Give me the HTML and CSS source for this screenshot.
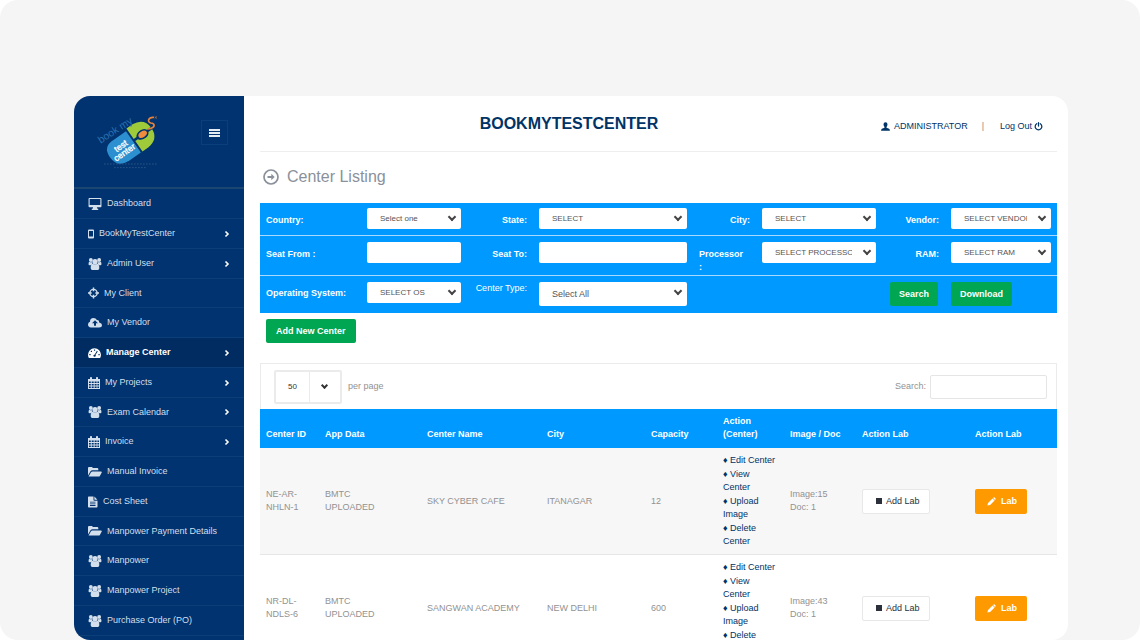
FILE: index.html
```html
<!DOCTYPE html>
<html lang="en">
<head>
<meta charset="utf-8">
<meta name="viewport" content="width=device-width, initial-scale=1">
<title>BookMyTestCenter - Center Listing</title>
<link rel="stylesheet" href="styles.css">
</head>
<body>
<svg class="sprite" aria-hidden="true">
  <symbol id="i-desktop" viewBox="0 0 14 13"><path fill-rule="evenodd" d="M1 0h12q1 0 1 1v8q0 1-1 1H9l.6 1.6h.9V13h-7v-1.400h.9L5 10H1q-1 0-1-1V1q0-1 1-1zm.2 1.200v6.300h11.600V1.200z"/></symbol>
  <symbol id="i-mobile" viewBox="0 0 6 12"><path fill-rule="evenodd" d="M1 1.500h4q1 0 1 1v7q0 1-1 1H1q-1 0-1-1v-7q0-1 1-1zm0 1.500v5.500h4V3z"/></symbol>
  <symbol id="i-users" viewBox="0 0 14 13"><circle cx="2.500" cy="2.200" r="2.100"/><circle cx="11.500" cy="2.200" r="2.100"/><circle cx="7" cy="4" r="2.900"/><path d="M0 6.500Q0 4 1.200 4q1.300 1 2.400.3Q3.700 6 4.600 6.800q-1.600.1-2.200 1H1Q0 7.800 0 6.500zM14 6.500Q14 4 12.800 4q-1.300 1-2.400.3-.1 1.700-1 2.500 1.600.1 2.200 1H13q1 0 1-1.300zM2.300 10.800q0-4 2.400-4.200Q7 7.200 9.300 6.600q2.400.2 2.400 4.200 0 2.200-1.800 2.200H4.100q-1.800 0-1.800-2.200z"/></symbol>
  <symbol id="i-cross" viewBox="0 0 12 12"><path fill="none" stroke="currentColor" stroke-width="1.500" d="M6 2a4 4 0 1 1 0 8 4 4 0 0 1 0-8z"/><path d="M5.200 0h1.600v4H5.200zM5.200 8h1.600v4H5.200zM0 5.200h4v1.600H0zM8 5.200h4v1.600H8z"/></symbol>
  <symbol id="i-cloud" viewBox="0 0 14 12"><path fill-rule="evenodd" d="M3 10.500Q0 10 0 7.500 0 5.500 2 4.700 2 1 5.500 1q2.400 0 3.400 2.100Q11.300 3 11.200 5.500 14 6 14 8q0 2.500-3 2.500zM7 3.300 4 6.300h2v2.500h2V6.300h2z"/></symbol>
  <symbol id="i-gauge" viewBox="0 0 14 12"><path fill-rule="evenodd" d="M7 1q3 0 5 2.100t2 4.900q0 1.700-.9 3.300H.9Q0 9.700 0 8q0-2.800 2-4.900T7 1zM6.400 2.200v1.500h1.300V2.200zM3 3.600v1.300h1.300V3.600zM1.400 7v1.300h1.400V7zM11.200 7v1.300h1.400V7zM9.600 3.700 7.300 7.500q-1.500.2-1.500 1.300 0 1.300 1.300 1.300t1.300-1.300q0-.5-.3-.9l2.400-3.600z"/></symbol>
  <symbol id="i-cal" viewBox="0 0 12 12"><path fill-rule="evenodd" d="M0 2h2V.5Q2 0 3 0t1 .5V2h4V.500Q8 0 9 0t1 .5V2h2v10H0zm1 2.500v1.500h1.800V4.500zm2.700 0v1.500h2V4.500zm2.900 0v1.500h2V4.500zm2.800 0v1.500H11V4.500zM1 6.900v1.600h1.800V6.900zm2.700 0v1.600h2V6.900zm2.900 0v1.600h2V6.900zm2.800 0v1.600H11V6.900zM1 9.400v1.700h1.800V9.400zm2.700 0v1.700h2V9.400zm2.900 0v1.700h2V9.400zm2.800 0v1.700H11V9.400z"/></symbol>
  <symbol id="i-folder" viewBox="0 0 14 12"><path d="M0 9.500V2q0-1 1-1h2.700q1 0 1 1h4.600q1 0 1 1v1.300H4.500q-1.200 0-2 .9z"/><path d="M.6 10.500 3 6.200q.5-.8 1.500-.8H13q1.200 0 .7 1L12 9.700q-.5.900-1.500.9z"/></symbol>
  <symbol id="i-file" viewBox="0 0 10 12"><path fill-rule="evenodd" d="M.7.500h4.800V4q0 .7.700.7h3.300v6.100q0 .7-.7.700H.7q-.7 0-.7-.7V1.200Q0 .500.700.500zM6.400.600l3 3.200h-3zM2 5.700v.9h5.500v-.9zm0 1.700v.9h5.500v-.9zm0 1.700v.9h5.500v-.9z"/></symbol>
  <symbol id="i-right" viewBox="0 0 6 8"><path fill="none" stroke="currentColor" stroke-width="1.600" d="M1.500 1.500l2.500 2.500-2.500 2.500"/></symbol>
  <symbol id="i-user" viewBox="0 0 10 10"><path d="M5 .3q2.200 0 2.200 2.300 0 2-1.100 3v.8L9 7.500q.9.400.9 2.200H.1q0-1.800.9-2.200l2.900-1.100v-.8q-1.100-1-1.100-3Q2.800.3 5 .3z"/></symbol>
  <symbol id="i-power" viewBox="0 0 10 10"><path fill="none" stroke="currentColor" stroke-width="1.400" stroke-linecap="round" d="M3 1.900a3.700 3.700 0 1 0 4 0M5 .8v3.700"/></symbol>
  <symbol id="i-go" viewBox="0 0 16 16"><circle cx="8" cy="8" r="7" fill="none" stroke="currentColor" stroke-width="1.700"/><path d="M4.500 7h3.800V4.800L11.700 8l-3.400 3.200V9H4.500z"/></symbol>
  <symbol id="i-pencil" viewBox="0 0 9 9"><path d="M.4 8.600 1 5.900l4.500-4.500 2.100 2.100L3.100 8zM6.100 1l.5-.5q.5-.4 1 0l.9.900q.4.500 0 1L8 2.900z"/></symbol>
</svg>

<div class="stage">
<div class="card">
  <aside class="sidebar">
    <div class="brand">
      <svg class="logo" viewBox="60 65 204 180" role="img" aria-label="book my test center">
        <g transform="translate(170 157) rotate(-35)">
          <path fill="#2b8fd0" d="M8-36V42H-35Q-76 40-76 0T-35-36z"/>
          <path fill="#9fcb3b" d="M14-42H36Q74-38 76-4H62Q58-14 44-14T24-4H14z"/>
          <path fill="#9fcb3b" d="M14 42H36Q74 38 76 4H62Q58 14 44 14T24 4H14z"/>
          <ellipse cx="44" cy="0" rx="14" ry="9" fill="#f08a3c"/>
          <text class="logo-test" x="-30" y="0">test</text>
          <text class="logo-test" x="-32" y="22">center</text>
        </g>
        <text class="logo-book" x="80" y="160" transform="rotate(-33 80 160)">book my</text>
        <path fill="none" stroke="#e8823a" stroke-width="5" stroke-linecap="round" d="M222 116C248 112 242 99 230 98C218 94 224 80 238 81"/>
        <path stroke="#b9793f" stroke-width="2" d="M242 78l7 7M249 78l-7 7"/>
        <path stroke="#3f6290" stroke-width="2" stroke-dasharray="5 4" d="M90 221H248M120 232H218"/>
      </svg>
      <button class="burger" type="button" aria-label="Toggle menu"><span></span><span></span><span></span></button>
    </div>
    <nav>
      <ul class="menu">
        <li><a href="#"><svg class="w14"><use href="#i-desktop"/></svg>Dashboard</a></li>
        <li><a href="#"><svg class="w6"><use href="#i-mobile"/></svg>BookMyTestCenter<svg class="more"><use href="#i-right"/></svg></a></li>
        <li><a href="#"><svg class="w14"><use href="#i-users"/></svg>Admin User<svg class="more"><use href="#i-right"/></svg></a></li>
        <li><a href="#"><svg class="w11"><use href="#i-cross"/></svg>My Client</a></li>
        <li><a href="#"><svg class="w14"><use href="#i-cloud"/></svg>My Vendor</a></li>
        <li class="active"><a href="#"><svg class="w13"><use href="#i-gauge"/></svg>Manage Center<svg class="more"><use href="#i-right"/></svg></a></li>
        <li><a href="#"><svg class="w12"><use href="#i-cal"/></svg>My Projects<svg class="more"><use href="#i-right"/></svg></a></li>
        <li><a href="#"><svg class="w14"><use href="#i-users"/></svg>Exam Calendar<svg class="more"><use href="#i-right"/></svg></a></li>
        <li><a href="#"><svg class="w12"><use href="#i-cal"/></svg>Invoice<svg class="more"><use href="#i-right"/></svg></a></li>
        <li><a href="#"><svg class="w14"><use href="#i-folder"/></svg>Manual Invoice</a></li>
        <li><a href="#"><svg class="w10"><use href="#i-file"/></svg>Cost Sheet</a></li>
        <li><a href="#"><svg class="w14"><use href="#i-folder"/></svg>Manpower Payment Details</a></li>
        <li><a href="#"><svg class="w14"><use href="#i-users"/></svg>Manpower</a></li>
        <li><a href="#"><svg class="w14"><use href="#i-users"/></svg>Manpower Project</a></li>
        <li><a href="#"><svg class="w14"><use href="#i-users"/></svg>Purchase Order (PO)</a></li>
      </ul>
    </nav>
  </aside>

  <main class="main">
    <header class="top">
      <h1>BOOKMYTESTCENTER</h1>
      <div class="account">
        <a href="#"><svg><use href="#i-user"/></svg>ADMINISTRATOR</a>
        <span class="bar">|</span>
        <a class="logout" href="#">Log Out<svg><use href="#i-power"/></svg></a>
      </div>
    </header>

    <h2><svg><use href="#i-go"/></svg>Center Listing</h2>

    <form class="filters">
      <div class="frow">
        <label class="first" for="country">Country:</label>
        <div class="ctl"><select id="country"><option>Select one</option></select></div>
        <label for="state">State:</label>
        <div class="ctl"><select id="state"><option>SELECT</option></select></div>
        <label for="city">City:</label>
        <div class="ctl"><select id="city"><option>SELECT</option></select></div>
        <label for="vendor">Vendor:</label>
        <div class="ctl"><select id="vendor"><option>SELECT VENDOR</option></select></div>
      </div>
      <div class="frow seats">
        <label class="first" for="from">Seat From :</label>
        <div class="ctl"><input id="from" type="text"></div>
        <label for="to">Seat To:</label>
        <div class="ctl"><input id="to" type="text"></div>
        <label class="left" for="cpu">Processor<br>:</label>
        <div class="ctl"><select id="cpu"><option>SELECT PROCESSOR</option></select></div>
        <label for="ram">RAM:</label>
        <div class="ctl"><select id="ram"><option>SELECT RAM</option></select></div>
      </div>
      <div class="frow last">
        <label class="first" for="os">Operating System:</label>
        <div class="ctl"><select id="os"><option>SELECT OS</option></select></div>
        <label class="plain" for="type">Center Type:</label>
        <div class="ctl"><select class="tall" id="type"><option>Select All</option></select></div>
        <div class="actions">
          <button class="btn" type="button">Search</button>
          <button class="btn" type="button">Download</button>
        </div>
      </div>
    </form>

    <div class="add"><button class="btn" type="button">Add New Center</button></div>

    <section class="listing">
      <div class="tools">
        <label class="pager"><span class="pagesel"><select><option>50</option></select></span>per page</label>
        <label class="find">Search: <input type="search"></label>
      </div>
      <table>
        <colgroup><col class="c1"><col class="c2"><col class="c3"><col class="c4"><col class="c5"><col class="c6"><col class="c7"><col class="c8"><col class="c9"></colgroup>
        <thead>
          <tr><th>Center ID</th><th>App Data</th><th>Center Name</th><th>City</th><th>Capacity</th><th>Action<br>(Center)</th><th>Image / Doc</th><th>Action Lab</th><th>Action Lab</th></tr>
        </thead>
        <tbody>
          <tr>
            <td>NE-AR-<br>NHLN-1</td><td>BMTC<br>UPLOADED</td><td>SKY CYBER CAFE</td><td>ITANAGAR</td><td>12</td>
            <td><ul class="acts"><li><a href="#">Edit Center</a></li><li><a href="#">View<br>Center</a></li><li><a href="#">Upload<br>Image</a></li><li><a href="#">Delete<br>Center</a></li></ul></td>
            <td>Image:15<br>Doc: 1</td>
            <td><button class="addlab" type="button"><i></i>Add Lab</button></td>
            <td><button class="lab" type="button"><svg><use href="#i-pencil"/></svg>Lab</button></td>
          </tr>
          <tr>
            <td>NR-DL-<br>NDLS-6</td><td>BMTC<br>UPLOADED</td><td>SANGWAN ACADEMY</td><td>NEW DELHI</td><td>600</td>
            <td><ul class="acts"><li><a href="#">Edit Center</a></li><li><a href="#">View<br>Center</a></li><li><a href="#">Upload<br>Image</a></li><li><a href="#">Delete<br>Center</a></li></ul></td>
            <td>Image:43<br>Doc: 1</td>
            <td><button class="addlab" type="button"><i></i>Add Lab</button></td>
            <td><button class="lab" type="button"><svg><use href="#i-pencil"/></svg>Lab</button></td>
          </tr>
        </tbody>
      </table>
    </section>
  </main>
</div>
</div>
</body>
</html>
```

FILE: styles.css
```css
*, ::before, ::after { box-sizing: border-box; }
body { margin: 0; background: #fff; font: 9px/13px "Liberation Sans", Arial, sans-serif; color: #929292; }
a { color: inherit; text-decoration: none; }
ul { list-style: none; margin: 0; padding: 0; }
button, input, select { font: inherit; margin: 0; }
svg { fill: currentColor; flex: none; }
.sprite { display: none; }

.stage { height: 100vh; padding: 96px 72px 0 74px; background: #f5f5f5; border-radius: 18px; overflow: hidden; }
.card { display: flex; height: 100%; background: #fff; border-radius: 16px; overflow: hidden; }

/* Sidebar */
.sidebar { flex: none; width: 170px; background: #00336f; color: #d3dfec; }
.brand { display: flex; justify-content: space-between; align-items: flex-start; height: 93px; padding: 16px 16px 0 20px; border-bottom: 2px solid #1c4672; }
.logo { width: 68px; height: 60px; }
.logo-book { font-size: 31px; fill: #2a70b2; }
.logo-test { font-size: 26px; fill: #fff; stroke: #fff; stroke-width: 1px; text-anchor: middle; }
.burger { display: flex; flex-direction: column; align-items: center; justify-content: center; gap: 1px; width: 27px; height: 25px; margin-top: 8px; padding: 0; background: none; border: 1px solid #0b3f7b; }
.burger span { width: 11px; height: 2px; background: #e4ebf3; }
.menu li { height: 30px; border-bottom: 1px solid #0c3f78; }
.menu li:nth-child(4n) { height: 29px; }
.menu a { display: flex; align-items: center; gap: 5px; height: 100%; padding: 0 14px; }
.menu svg { height: 12px; }
.menu .more { width: 6px; height: 8px; margin-left: auto; color: #fff; }
.menu .active { background: #002c61; color: #fff; font-weight: bold; }
.w6 { width: 6px; }
.w10 { width: 10px; }
.w11 { width: 11px; }
.w12 { width: 12px; }
.w13 { width: 13px; }
.w14 { width: 14px; }

/* Page header */
.main { flex: 1; min-width: 0; padding: 0 11px 0 16px; }
.top { display: flex; align-items: center; height: 56px; border-bottom: 1px solid #eee; color: #003366; }
h1 { flex: 1; margin: 0; font-size: 16px; line-height: 20px; text-align: center; }
.account { display: flex; align-items: center; width: 179px; padding: 6px 14px 0 3px; }
.account a { display: flex; align-items: center; gap: 4px; }
.account .logout { gap: 2px; margin-left: auto; }
.account svg { width: 9px; height: 9px; }
.bar { margin-left: 14px; color: #888; }
h2 { display: flex; align-items: center; gap: 8px; margin: 0; padding: 14px 3px 16px; font-size: 16px; line-height: 21px; font-weight: normal; color: #8a919b; }
h2 svg { width: 16px; height: 16px; }

/* Filters */
.filters { background: #0099ff; color: #fff; }
.frow { display: grid; grid-template-columns: minmax(0, 101fr) minmax(0, 106fr) minmax(0, 66fr) minmax(0, 160fr) minmax(0, 63fr) minmax(0, 126fr) minmax(0, 63fr) minmax(0, 112fr); padding: 5px 0 6px; border-bottom: 1px solid #a9d9ff; }
.frow.seats { padding: 6px 0 1px; }
.frow.last { padding: 6px 0 7px; border: 0; }
.frow label { padding: 6px 6px 0; text-align: right; font-weight: bold; }
.frow.last label { padding-top: 5px; }
.frow .first, .frow .left { text-align: left; }
.frow.last .plain { padding-top: 0; font-weight: normal; white-space: nowrap; }
.ctl { position: relative; padding: 0 6px; }
.ctl select, .ctl input { display: block; width: 100%; height: 21px; padding: 0 24px 1px 13px; border: 0; border-radius: 2px; background: #fff; font-size: 8px; color: #555; }
.ctl select, .pagesel select { appearance: none; }
.ctl:has(select)::after { content: ""; position: absolute; top: 6px; right: 12px; width: 6px; height: 6px; border: solid #444; border-width: 0 2px 2px 0; transform: rotate(45deg); pointer-events: none; }
.ctl .tall { height: 24px; padding-bottom: 0; font-size: 9px; }
.actions { grid-column: 5 / -1; display: flex; justify-content: flex-end; gap: 13px; padding-right: 45px; }
.btn { height: 24px; padding: 0 10px; border: 0; border-radius: 2px; background: #00a651; color: #fff; font-weight: bold; white-space: nowrap; }
.actions .btn { padding: 0 9px; }
.add { padding: 6px 6px 20px; }

/* Listing */
.tools { display: flex; justify-content: space-between; align-items: center; height: 46px; padding: 0 9px 0 13px; border: 1px solid #ebebeb; border-bottom: 0; }
.pager { display: flex; align-items: center; gap: 6px; }
.pagesel { position: relative; border: 2px solid #ebebeb; border-radius: 2px; }
.pagesel select { display: block; width: 64px; height: 30px; padding: 0 12px; border: 0; color: #333; font-size: 8px; background: linear-gradient(90deg, #fff 33px, #ebebeb 33px, #ebebeb 34px, #fff 34px); }
.pagesel::after { content: ""; position: absolute; top: 11px; right: 13px; width: 5px; height: 5px; border: solid #333; border-width: 0 2px 2px 0; transform: rotate(45deg); pointer-events: none; }
.find { display: flex; align-items: center; gap: 4px; }
.find input { width: 117px; height: 24px; border: 1px solid #e5e5e5; border-radius: 2px; background: #fff; }
table { width: 100%; table-layout: fixed; border-collapse: separate; border-spacing: 0; }
.c1 { width: 59px; }
.c2 { width: 102px; }
.c3 { width: 120px; }
.c4 { width: 104px; }
.c5 { width: 72px; }
.c6 { width: 67px; }
.c7 { width: 72px; }
.c8 { width: 113px; }
.c9 { width: 88px; }
th { padding: 6px 6px 7px; background: #0099ff; color: #fff; text-align: left; vertical-align: bottom; white-space: nowrap; }
td { padding: 6px; border-bottom: 1px solid #e6e6e6; vertical-align: middle; }
tbody tr:nth-child(odd) { background: #f7f7f7; }
.acts { color: #003366; }
.acts li { white-space: nowrap; }
.acts li + li { margin-top: 1px; }
.acts li::before { content: "♦ "; }
.addlab, .lab { display: flex; align-items: center; height: 25px; border-radius: 2px; white-space: nowrap; }
.addlab { gap: 4px; padding: 0 9px 0 13px; border: 1px solid #e8e8e8; background: #fff; color: #2b303a; }
.addlab i { width: 6px; height: 6px; background: #2b303a; }
.lab { gap: 5px; padding: 0 10px 0 12px; border: 0; background: #ff9900; color: #fff; font-weight: bold; }
.lab svg { width: 9px; height: 9px; }
```
